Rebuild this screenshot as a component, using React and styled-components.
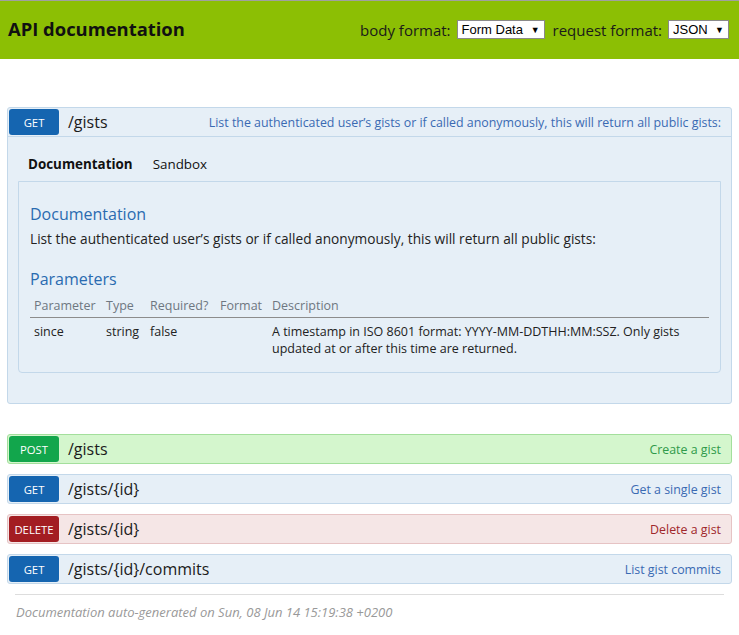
import React from 'react'
import styled, { createGlobalStyle } from 'styled-components'

const GlobalStyle = createGlobalStyle`
  html, body {
    margin: 0;
    padding: 0;
    background: #fff;
  }
  body {
    font-family: "Open Sans", "DejaVu Sans", sans-serif;
    color: #222;
  }
`

const methods = {
  GET: { badge: '#1565b0', bg: '#e6eff7', border: '#c3d8ea', text: '#3a6ab3' },
  POST: { badge: '#12a64c', bg: '#d4f6cd', border: '#a3df9c', text: '#2f9a4a' },
  DELETE: { badge: '#a31d22', bg: '#f5e6e6', border: '#e6c3c4', text: '#a0272b' },
}

const Header = styled.header`
  display: flex;
  align-items: center;
  justify-content: space-between;
  height: 58px;
  padding: 0 10px 0 8px;
  background: #8cbf04;
  border-top: 1px solid #a0a0a0;
`

const Title = styled.h1`
  margin: 0 0 3px 0;
  font-size: 18.4px;
  font-weight: 700;
  color: #111;
`

const Controls = styled.div`
  display: flex;
  align-items: center;
  gap: 6px;
  font-size: 15px;
  color: #1a1a1a;
  margin-bottom: 1px;
`

const Label = styled.span`
  margin-left: ${(p) => (p.$first ? 0 : 2)}px;
`

const Select = styled.span`
  display: inline-flex;
  align-items: center;
  justify-content: space-between;
  box-sizing: border-box;
  width: ${(p) => p.$w}px;
  height: 19px;
  padding: 0 4px 0 4px;
  background: #fff;
  border: 1px solid #8a8a8a;
  font-family: "Liberation Sans", Arial, sans-serif;
  font-size: 13px;
  color: #000;
`

const Caret = styled.span`
  font-size: 9px;
`

const Main = styled.main`
  padding: 48px 7px 0 7px;
`

const Endpoint = styled.section`
  margin-bottom: ${(p) => (p.$open ? 30 : 10)}px;
  background: ${(p) => methods[p.$method].bg};
  border: 1px solid ${(p) => methods[p.$method].border};
  border-radius: 3px;
`

const Row = styled.div`
  display: flex;
  align-items: center;
  height: 28px;
  border-bottom: ${(p) => (p.$open ? `1px solid ${methods[p.$method].border}` : 'none')};
`

const Badge = styled.span`
  display: flex;
  align-items: center;
  justify-content: center;
  width: 50px;
  align-self: stretch;
  margin: 1px 0 1px 1px;
  border-radius: 3px;
  background: ${(p) => methods[p.$method].badge};
  color: #fff;
  font-size: 11.3px;
`

const Path = styled.span`
  margin-left: 9px;
  font-size: 16px;
  color: #1b1b1b;
`

const Summary = styled.span`
  margin-left: auto;
  padding-right: 10px;
  font-size: 12.4px;
  color: ${(p) => methods[p.$method].text};
`

const Body = styled.div`
  padding: 0 10px 30px 10px;
`

const Tabs = styled.div`
  display: flex;
  gap: 20px;
  height: 44px;
  align-items: flex-end;
  box-sizing: border-box;
  padding: 0 0 8px 10px;
  font-size: 13.4px;
  color: #111;
`

const Tab = styled.span`
  font-weight: ${(p) => (p.$active ? 700 : 400)};
`

const Panel = styled.div`
  padding: 20px 11px 11px 11px;
  border: 1px solid #c3d8ea;
  border-radius: 0 0 4px 4px;
`

const Heading = styled.h2`
  margin: 0 0 3px 0;
  font-size: 16px;
  font-weight: 400;
  color: #2a6bb0;
  line-height: 24px;
`

const Text = styled.p`
  margin: 0 0 18px 0;
  font-size: 13.7px;
  color: #222;
  line-height: 20px;
`

const Table = styled.table`
  width: 100%;
  border-collapse: collapse;
  font-size: 12.5px;
`

const Th = styled.th`
  padding: 3px 4px 3px 4px;
  text-align: left;
  font-weight: 400;
  color: #6e7781;
  border-bottom: 1px solid #8c8c8c;
  white-space: nowrap;
`

const Td = styled.td`
  padding: 5px 4px 4px 4px;
  vertical-align: top;
  color: #222;
  line-height: 17px;
`

const Footer = styled.footer`
  margin: 0 15px 0 15px;
  padding: 8px 1px 0 1px;
  border-top: 1px solid #ddd;
  font-size: 13px;
  font-style: italic;
  color: #999;
`

const endpoints = [
  { method: 'POST', path: '/gists', summary: 'Create a gist' },
  { method: 'GET', path: '/gists/{id}', summary: 'Get a single gist' },
  { method: 'DELETE', path: '/gists/{id}', summary: 'Delete a gist' },
  { method: 'GET', path: '/gists/{id}/commits', summary: 'List gist commits' },
]

const listText = 'List the authenticated user\u2019s gists or if called anonymously, this will return all public gists:'

const App = () => (
  <>
    <GlobalStyle />
    <Header>
      <Title>API documentation</Title>
      <Controls>
        <Label $first>body format:</Label>
        <Select $w={88}>Form Data <Caret>▼</Caret></Select>
        <Label>request format:</Label>
        <Select $w={61}>JSON <Caret>▼</Caret></Select>
      </Controls>
    </Header>
    <Main>
      <Endpoint $method="GET" $open>
        <Row $method="GET" $open>
          <Badge $method="GET">GET</Badge>
          <Path>/gists</Path>
          <Summary $method="GET">{listText}</Summary>
        </Row>
        <Body>
          <Tabs>
            <Tab $active>Documentation</Tab>
            <Tab>Sandbox</Tab>
          </Tabs>
          <Panel>
            <Heading>Documentation</Heading>
            <Text>{listText}</Text>
            <Heading>Parameters</Heading>
            <Table>
              <thead>
                <tr>
                  <Th style={{ width: 64 }}>Parameter</Th>
                  <Th style={{ width: 36 }}>Type</Th>
                  <Th style={{ width: 62 }}>Required?</Th>
                  <Th style={{ width: 44 }}>Format</Th>
                  <Th>Description</Th>
                </tr>
              </thead>
              <tbody>
                <tr>
                  <Td>since</Td>
                  <Td>string</Td>
                  <Td>false</Td>
                  <Td />
                  <Td>A timestamp in ISO 8601 format: YYYY-MM-DDTHH:MM:SSZ. Only gists updated at or after this time are returned.</Td>
                </tr>
              </tbody>
            </Table>
          </Panel>
        </Body>
      </Endpoint>
      {endpoints.map((e, i) => (
        <Endpoint key={i} $method={e.method}>
          <Row $method={e.method}>
            <Badge $method={e.method}>{e.method}</Badge>
            <Path>{e.path}</Path>
            <Summary $method={e.method}>{e.summary}</Summary>
          </Row>
        </Endpoint>
      ))}
    </Main>
    <Footer>Documentation auto-generated on Sun, 08 Jun 14 15:19:38 +0200</Footer>
  </>
)

export default App
